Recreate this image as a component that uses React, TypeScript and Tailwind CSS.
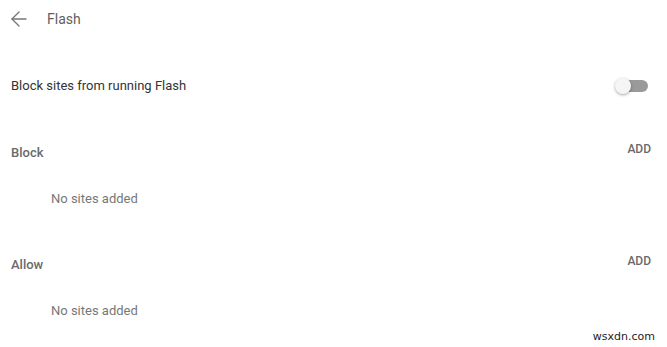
import { ArrowLeft } from "lucide-react";

function SiteList({ title }: { title: string }) {
  return (
    <section className="flex flex-col">
      <div className="flex h-[28px] items-start justify-between">
        <h2 className="pt-[6px] text-[13px] font-medium leading-[16px] text-[#6a6a6a]">{title}</h2>
        <button className="mr-[16px] pt-[2px] text-[12px] font-medium leading-[16px] text-[#6a6a6a]" type="button">
          ADD
        </button>
      </div>
      <div className="flex h-[64px] items-center pl-[40px] text-[13px] text-[#777]">No sites added</div>
    </section>
  );
}

export default function App() {
  return (
    <div className="relative h-[347px] w-[667px] overflow-hidden bg-white font-['Roboto',sans-serif]">
      <header className="flex h-[37px] items-center">
        <ArrowLeft className="ml-[7px] h-[24px] w-[24px] text-[#777]" strokeWidth={1.4} />
        <h1 className="ml-[16px] text-[14px] leading-[16px] text-[#5f5f5f]">Flash</h1>
      </header>

      <div className="pl-[11px]">
        <div className="mt-[32px] flex h-[34px] items-center justify-between">
          <span className="text-[13px] text-[#333]">Block sites from running Flash</span>
          <span className="relative mr-[19px] block h-[12px] w-[28px] rounded-full bg-[#9a9a9a]">
            <span className="absolute -left-[5px] -top-[2px] h-[16px] w-[16px] rounded-full bg-[#f5f5f5] shadow-[0_1px_3px_rgba(0,0,0,0.35)]" />
          </span>
        </div>

        <div className="mt-[36px] flex flex-col gap-[20px]">
          <SiteList title="Block" />
          <SiteList title="Allow" />
        </div>
      </div>

      <span className="absolute bottom-[2px] right-[12px] font-['DejaVu_Sans',sans-serif] text-[11px] text-[#222]">
        wsxdn.com
      </span>
    </div>
  );
}
